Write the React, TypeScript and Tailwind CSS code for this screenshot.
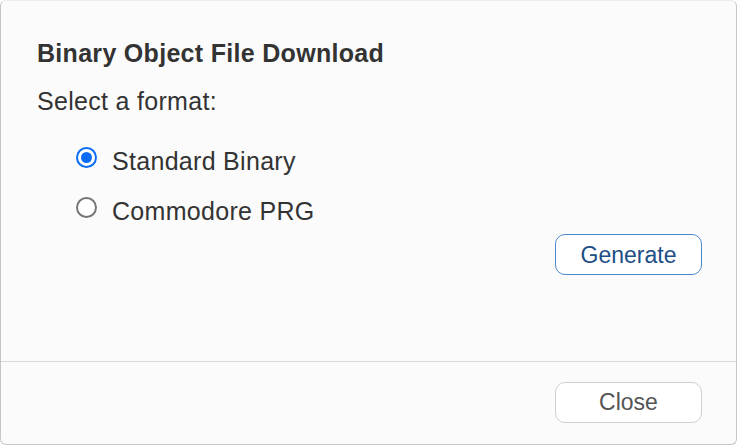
import React, { useState } from 'react';

const formats = [
  { id: 'bin', label: 'Standard Binary' },
  { id: 'prg', label: 'Commodore PRG' },
];

const Radio = ({ checked }: { checked: boolean }) =>
  checked ? (
    <span className="-mt-[2px] flex h-[21px] w-[21px] shrink-0 items-center justify-center rounded-full border-2 border-[#0a6cf5] bg-white">
      <span className="h-[11px] w-[11px] rounded-full bg-[#0a6cf5]" />
    </span>
  ) : (
    <span className="-mt-[2px] h-[21px] w-[21px] shrink-0 rounded-full border-2 border-[#767676] bg-white" />
  );

export default function App() {
  const [format, setFormat] = useState('bin');

  return (
    <div className="h-[445px] w-[737px] bg-white font-['Liberation_Sans',Arial,sans-serif] text-[#333]">
      <div className="flex h-full flex-col rounded-[6px] border border-[#c6c6c6] border-t-[#ebebeb] bg-[#fbfbfb]">
        <div className="flex flex-1 flex-col pl-[36px] pr-[34px] pt-[40px]">
          <h2 className="text-[25px] font-bold leading-[25px] tracking-[0.3px]">Binary Object File Download</h2>
          <p className="mt-[23px] text-[25px] leading-[25px] tracking-[0.3px]">Select a format:</p>

          <div className="ml-[39px] mt-[35px] flex flex-col gap-[25px]">
            {formats.map((f) => (
              <label key={f.id} className="flex cursor-pointer items-start gap-[15px]" onClick={() => setFormat(f.id)}>
                <Radio checked={format === f.id} />
                <span className="text-[25px] leading-[25px] tracking-[0.3px]">{f.label}</span>
              </label>
            ))}
          </div>

          <div className="mt-[10px] flex justify-end">
            <button className="h-[41px] w-[147px] rounded-[10px] border border-[#4b87c9] bg-white pt-[1px] text-[23px] text-[#1d4e86]">
              Generate
            </button>
          </div>
        </div>

        <div className="flex h-[83px] justify-end border-t border-[#dadada] pr-[34px] pt-[20px]">
          <button className="h-[41px] w-[147px] rounded-[10px] border border-[#cfcfcf] bg-white text-[23px] text-[#555]">
            Close
          </button>
        </div>
      </div>
    </div>
  );
}
